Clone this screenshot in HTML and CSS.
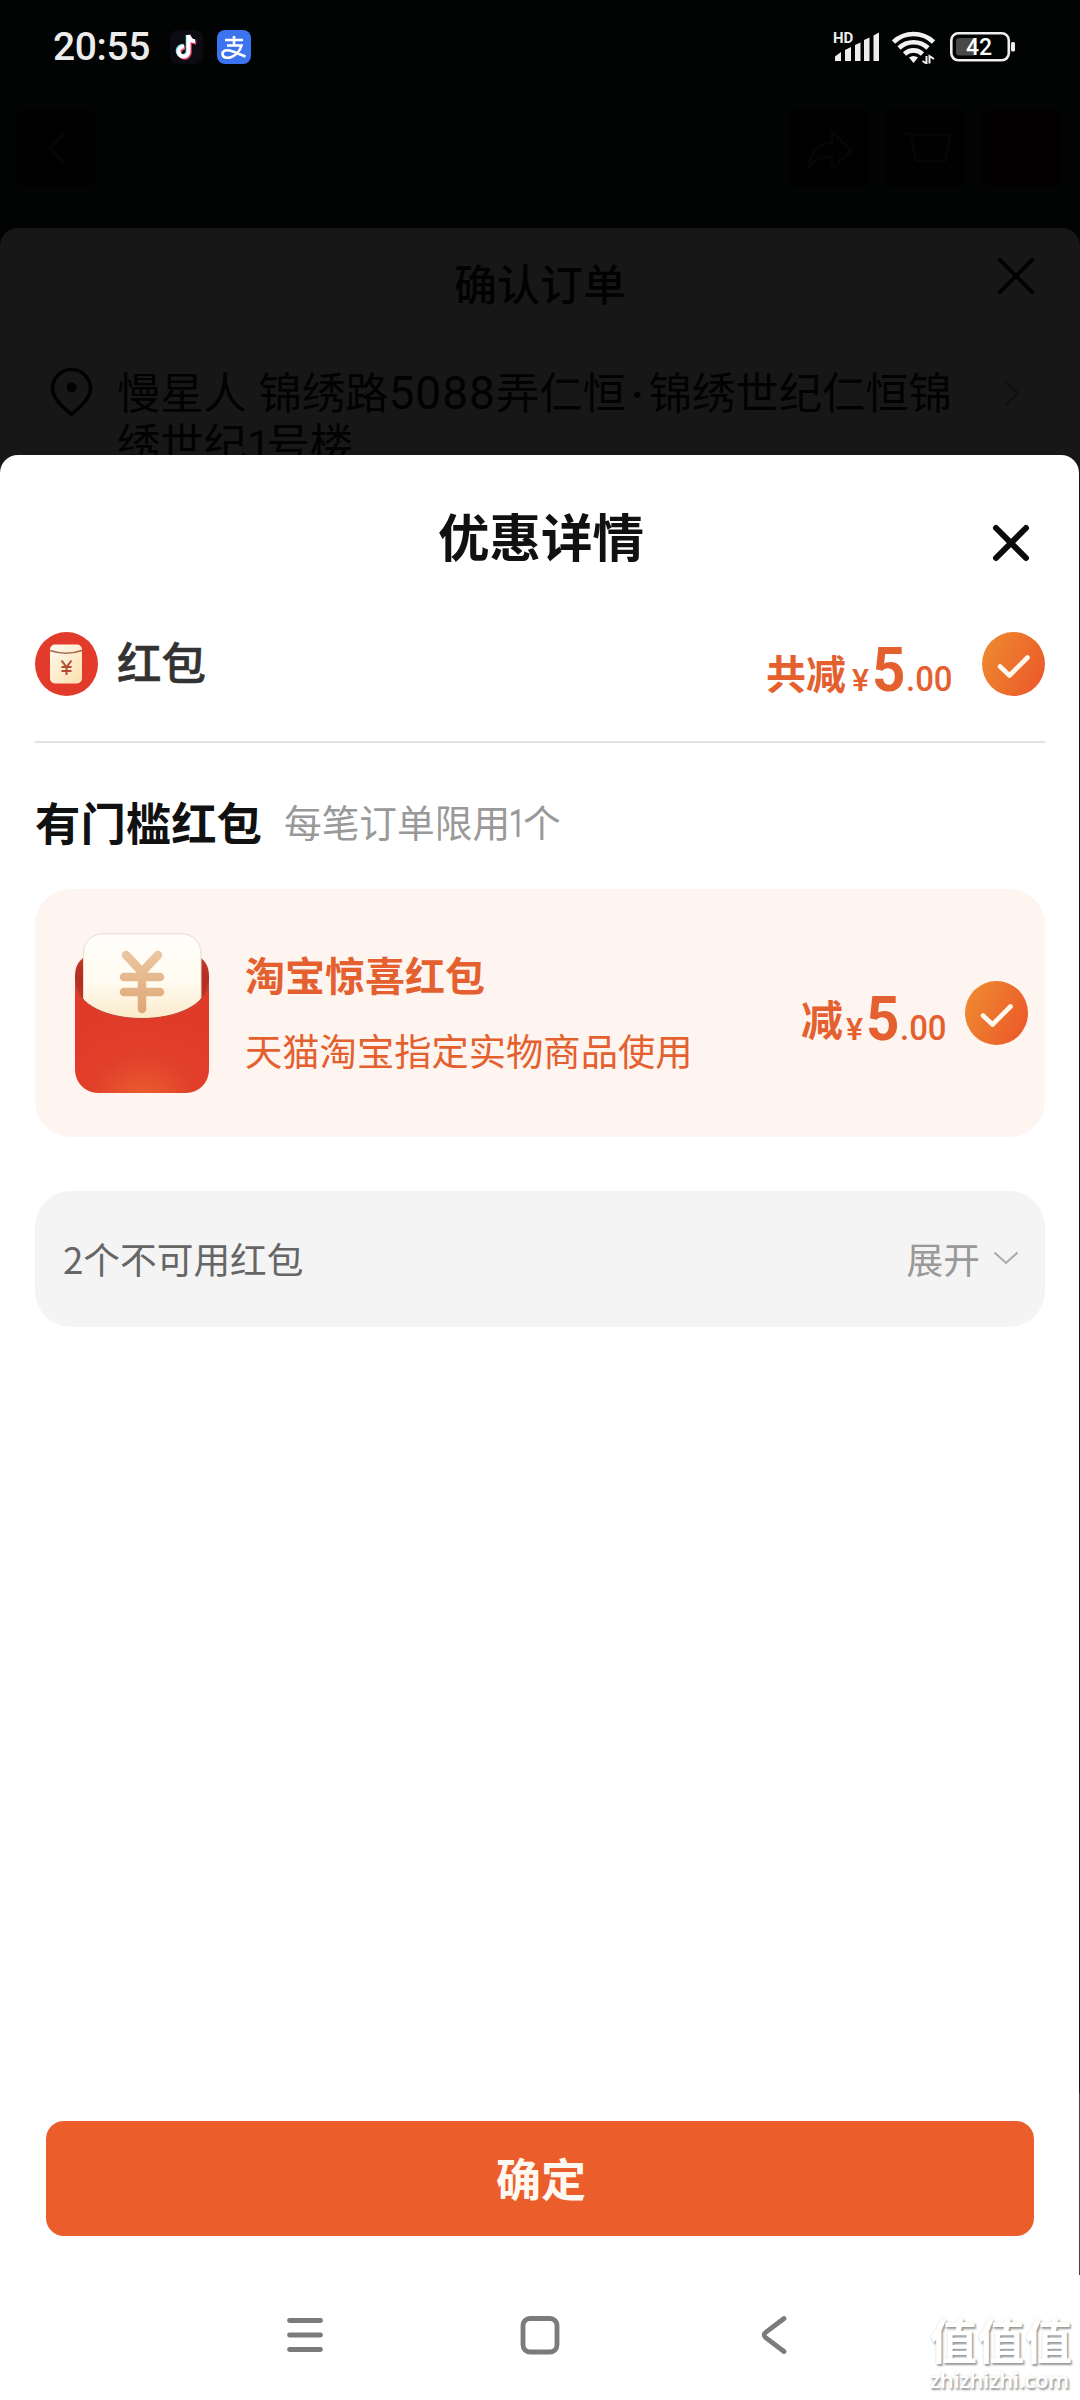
FILE: index.html
```html
<!DOCTYPE html>
<html lang="zh-CN">
<head>
<meta charset="utf-8">
<title>优惠详情</title>
<link rel="stylesheet" href="styles.css">
</head>
<body>
<svg width="0" height="0" class="defs" aria-hidden="true">
  <defs>
    <linearGradient id="tick" x1="0" y1="0.2" x2="1" y2="0.7"><stop offset="0" stop-color="#ee8a30"/><stop offset="1" stop-color="#ec5a2a"/></linearGradient>
    <linearGradient id="paper" x1="0" y1="0" x2="0" y2="1"><stop offset="0" stop-color="#fffefb"/><stop offset="0.55" stop-color="#fffbf0"/><stop offset="1" stop-color="#fbe8c6"/></linearGradient>
    <radialGradient id="pocket" cx="0.5" cy="1.05" r="0.75"><stop offset="0" stop-color="#e8602e"/><stop offset="0.5" stop-color="#e2402b"/><stop offset="1" stop-color="#e03a29"/></radialGradient>
    <linearGradient id="back" x1="0" y1="0" x2="0" y2="1"><stop offset="0" stop-color="#c53a2c"/><stop offset="0.3" stop-color="#b42e22"/><stop offset="1" stop-color="#d8392a"/></linearGradient>
    <linearGradient id="yuan" x1="0" y1="0" x2="0" y2="1"><stop offset="0" stop-color="#ebc5a0"/><stop offset="1" stop-color="#dfa878"/></linearGradient>
    <linearGradient id="mini" x1="0" y1="0" x2="1" y2="1"><stop offset="0" stop-color="#fffaf0"/><stop offset="1" stop-color="#fbdfae"/></linearGradient>
    <symbol id="check" viewBox="0 0 63 64"><ellipse cx="31.5" cy="32" rx="31.5" ry="32" fill="url(#tick)"/><path d="M18 34.5 27.5 43.5 45.500 25.500" fill="none" stroke="#fff8ee" stroke-width="4.600" stroke-linecap="round" stroke-linejoin="round"/></symbol>
  </defs>
</svg>
<div class="phone">
  <header class="backdrop">
    <div class="status">
      <span class="clock">20:55</span>
      <svg class="app-tiktok" viewBox="0 0 33 34"><rect width="33" height="34" rx="8" fill="#0c0b12"/><g fill="none" stroke-width="4"><path d="M14.500 17a5 5 0 1 0 4.500 5V6c.5 4 3 5.500 6.500 6" stroke="#e8476c" transform="translate(.7 .7)"/><path d="M14 16.500a5 5 0 1 0 4.500 5V5.500" stroke="#5fd8e0" transform="translate(-.8 -.6)"/><path d="M14 16.500a5 5 0 1 0 4.500 5V5c.5 4 3 6 6.500 6.300" stroke="#fff"/></g></svg>
      <svg class="app-alipay" viewBox="0 0 34 34"><rect width="34" height="34" rx="8" fill="#3c73ee"/><g fill="none" stroke="#fff" stroke-width="2.600"><path d="M17 6v9.500M8 10h18M10 15.500h14.500c-1.500 5-5 9.500-10 11.500-4.500 1.700-9 .5-9-3s4.500-4.700 9-3c5 1.700 9 4 14 5.500"/></g></svg>
      <span class="grow"></span>
      <svg class="signal" viewBox="0 0 48 34" fill="#eee"><text x="0" y="13" class="hd">HD</text><path d="M2 31v-4.500l6-4.500v9zM12 31V20l6-3v14zM22 31V15l5.500-2.500V31zM31 31V10l5.500-2.500V31zM40.500 31V5.500L46 2.500V31z"/></svg>
      <svg class="wifi" viewBox="0 0 43 34"><g fill="none" stroke="#f2f2f2" stroke-width="4.600"><path d="M1.500 12a29 29 0 0 1 40 0"/><path d="M7 18a21 21 0 0 1 29 0"/><path d="M12.500 24a13 13 0 0 1 18 0"/></g><path d="M17 27.500q4.500-3 9 0L21.500 33z" fill="#f2f2f2"/><path d="M30.500 31l4 2.500V26M37.500 33.500V26l4.500 3" fill="none" stroke="#f2f2f2" stroke-width="2"/></svg>
      <svg class="battery" viewBox="0 0 66 30"><rect x="1.300" y="1.300" width="57.500" height="27" rx="7" fill="none" stroke="#eee" stroke-width="2.600"/><rect x="6" y="6" width="20" height="17.500" rx="3" fill="#484848"/><rect x="61" y="10" width="4" height="9.500" rx="1.500" fill="#eee"/><text x="29" y="23" text-anchor="middle" class="pct">42</text></svg>
    </div>
    <div class="tools">
      <span class="tool"><svg viewBox="0 0 78 78"><path d="M48 24 33 39l15 16"/></svg></span>
      <span class="grow"></span>
      <span class="tool"><svg viewBox="0 0 78 78"><path d="M18 58c2-16 10-24 24-24V22l20 20-20 18V48c-10 0-18 3-24 10z"/></svg></span>
      <span class="tool"><svg viewBox="0 0 78 78"><path d="M18 24h6l6 28h30l5-26H26M32 61h2M56 61h2"/></svg></span>
      <span class="tool hot"></span>
    </div>
  </header>

  <section class="order">
    <div class="order-head">
      <h2>确认订单</h2>
      <svg viewBox="0 0 40 40"><path d="M4 4 36 36M36 4 4 36" stroke="#020202" stroke-width="4" stroke-linecap="round"/></svg>
    </div>
    <div class="address">
      <svg class="pin" viewBox="0 0 43 50" fill="none"><path d="M21.500 47.500C17 43 2.500 33 2.500 21.500a19 19 0 0 1 38 0C40.500 33 26 43 21.500 47.500z" stroke="#020202" stroke-width="3.600" stroke-linejoin="round"/><circle cx="21.500" cy="20.500" r="5" fill="#020202"/></svg>
      <p>慢星人 锦绣路<span class="num">5088</span>弄仁恒<span class="dot">·</span>锦绣世纪仁恒锦<br>绣世纪<span class="one">1</span>号楼</p>
      <svg class="more" viewBox="0 0 20 28"><path d="M3 2 16 14 3 26" fill="none" stroke="#0e0e0e" stroke-width="2"/></svg>
    </div>
  </section>

  <main class="under">
    <section class="sheet">
      <div class="sheet-head">
        <h1>优惠详情</h1>
        <svg viewBox="0 0 40 40"><path d="M5 5 35 35M35 5 5 35" stroke="#0b0b0b" stroke-width="6" stroke-linecap="round"/></svg>
      </div>
      <div class="summary">
        <svg class="coin" viewBox="0 0 63 64"><ellipse cx="31.500" cy="32" rx="31.500" ry="32" fill="#e33b2b"/><rect x="15" y="12.500" width="32" height="39" rx="5" fill="url(#mini)"/><path d="M15 18.500q16 5.500 32 0" fill="none" stroke="#a8674b" stroke-width="1.500"/><g fill="none" stroke="#b54b31" stroke-width="2"><path d="m26.500 28.500 5 6.500 5-6.500M31.500 34v9M26.500 35h10M26.500 39h10"/></g></svg>
        <span class="label">红包</span>
        <span class="grow"></span>
        <span class="price total"><b class="word">共减</b><span class="yen">¥</span><b class="int">5</b><span class="dec">.00</span></span>
        <svg class="check"><use href="#check"/></svg>
      </div>
      <div class="group">
        <h3>有门槛红包</h3>
        <span>每笔订单限用<i>1</i>个</span>
      </div>
      <article class="coupon">
        <svg class="envelope" viewBox="0 0 134 161">
          <path d="M0 43C0 31 6 25 13 23H121C128 25 134 31 134 43V100H0z" fill="url(#back)"/>
          <path d="M8.500 90V20A19 19 0 0 1 27.500.8H107A19 19 0 0 1 126 20V90z" fill="url(#paper)" stroke="#e6dccb" stroke-width="1"/>
          <path d="m51 22 16 17 16-17M67 39v37M49 44h36M49 59h36" fill="none" stroke="url(#yuan)" stroke-width="8.500" stroke-linecap="round" stroke-linejoin="round"/>
          <path d="M0 48C2 98 132 98 134 48V137A23 23 0 0 1 111 160H23A23 23 0 0 1 0 137z" fill="url(#pocket)"/>
          <path d="M.5 48C2 98 132 98 133.500 48" fill="none" stroke="#bd4433" stroke-width="1"/>
        </svg>
        <div class="info">
          <h4>淘宝惊喜红包</h4>
          <p>天猫淘宝指定实物商品使用</p>
        </div>
        <span class="grow"></span>
        <span class="price"><b class="word">减</b><span class="yen">¥</span><b class="int">5</b><span class="dec">.00</span></span>
        <svg class="check"><use href="#check"/></svg>
      </article>
      <div class="unusable">
        <span>2个不可用红包</span>
        <span class="grow"></span>
        <span class="expand">展开</span>
        <svg viewBox="0 0 26 14"><path d="m1.500 1.500 11.500 10.500 11.500-10.500" fill="none" stroke="#aaa" stroke-width="2"/></svg>
      </div>
      <button class="confirm">确定</button>
    </section>
  </main>

  <nav class="nav">
    <svg viewBox="0 0 40 40"><path d="M4.500 5.500h31M4.500 20h31M4.500 34.500h31"/></svg>
    <svg viewBox="0 0 40 40"><rect x="3" y="3.500" width="34" height="33.500" rx="7"/></svg>
    <svg viewBox="0 0 40 40"><path d="M30 3.500 12 17q-3.500 3 0 6l18 13.500"/></svg>
    <div class="watermark"><strong>值值值</strong><span>zhizhizhi.com</span></div>
  </nav>
</div>
</body>
</html>
```
FILE: styles.css
```css
* { box-sizing: border-box; }
body, h1, h2, h3, h4, p { margin: 0; }
body { background: #fff; font-family: "Noto Sans CJK SC", sans-serif; }
svg { display: block; flex: none; }
.defs { position: absolute; }
.grow { flex: 1; }
.phone { width: 1080px; height: 2400px; display: flex; flex-direction: column; overflow: hidden; background: #020303; }

.backdrop { height: 228px; background: #020303; }
.status { height: 107px; padding: 30px 64px 0 53px; display: flex; align-items: flex-start; }
.clock { width: 117px; font: 500 39px/34px Roboto, sans-serif; letter-spacing: -.4px; color: #ececec; }
.app-tiktok { width: 33px; height: 34px; margin-right: 14px; }
.app-alipay { width: 34px; height: 34px; }
.signal { width: 48px; height: 34px; margin-right: 11px; overflow: visible; }
.hd { font: 700 15px Roboto, sans-serif; }
.wifi { width: 43px; height: 34px; margin-right: 15px; }
.battery { width: 66px; height: 30px; margin-top: 2px; }
.pct { font: 500 23px Roboto, sans-serif; fill: #fff; }
.tools { display: flex; gap: 18px; padding: 3px 20px 0 17px; }
.tool { width: 78px; height: 76px; border-radius: 6px; background: #010101; }
.tool svg { width: 78px; height: 76px; fill: none; stroke: #050606; stroke-width: 3; }
.hot { background: #030001; }

.order { height: 227px; flex: none; overflow: hidden; background: #171717; border-radius: 18px 18px 0 0; color: #020202; }
.order-head { height: 107px; display: grid; grid-template-columns: 1fr auto 1fr; align-items: center; }
.order-head h2 { grid-column: 2; font-size: 43px; font-weight: 500; line-height: 60px; }
.order-head svg { width: 40px; height: 40px; justify-self: end; margin: 0 44px 11px 0; }
.address { display: flex; align-items: flex-start; padding: 30px 58px 0 50px; }
.pin { width: 43px; height: 50px; margin: 2px 24px 0 0; }
.address p { flex: 1; font-size: 43.3px; line-height: 51px; white-space: nowrap; word-spacing: 2px; }
.num { font: 400 46px/40px Roboto, sans-serif; letter-spacing: 1px; }
.dot { display: inline-block; width: 23px; text-align: center; font: 700 43px/40px Roboto, sans-serif; }
.one { font: 400 42px/40px Roboto, sans-serif; letter-spacing: -4px; }
.more { width: 20px; height: 28px; margin-top: 14px; }

.under { height: 1820px; flex: none; background: linear-gradient(#171717 90%, #444 90%); }
.sheet { width: 1079px; height: 1820px; padding: 0 34px 0 35px; display: flex; flex-direction: column; background: #fff; border-radius: 18px 18px 0 0; }
.sheet-head { height: 158px; display: grid; grid-template-columns: 1fr auto 1fr; align-items: center; }
.sheet-head h1 { grid-column: 2; margin: 2px -1px 0 1px; font-size: 51.5px; font-weight: 700; line-height: 70px; color: #111; }
.sheet-head svg { width: 40px; height: 40px; justify-self: end; margin: 18px 14px 0 0; }
.summary { height: 130px; padding-bottom: 26px; display: flex; align-items: center; border-bottom: 2px solid #e2e2e2; }
.coin { width: 63px; height: 64px; }
.label { margin: -6px 0 0 19px; font-size: 44.5px; font-weight: 500; line-height: 60px; color: #333; -webkit-text-stroke: .6px #333; }
.price { display: flex; align-items: baseline; height: 60px; line-height: 60px; color: #e4602f; }
.word { position: relative; top: -2px; font-size: 40px; font-weight: 700; }
.yen { width: 20px; margin-left: 6px; font: 500 32px/60px Roboto, sans-serif; }
.int { width: 34px; font: 700 62px/60px Roboto, sans-serif; transform: scaleX(.94); transform-origin: left; }
.dec { width: 48px; font: 500 35px/60px Roboto, sans-serif; transform: scaleX(.94); transform-origin: left; }
.total { margin-top: 11px; }
.check { width: 63px; height: 64px; margin-left: 28px; }
.group { height: 145px; display: flex; align-items: center; padding-top: 10px; gap: 22px; }
.group h3 { font-size: 45.4px; font-weight: 700; line-height: 66px; color: #111; }
.group span { font-size: 37.7px; line-height: 66px; color: #999; }
.group i { display: inline-block; width: 13px; font: 400 38px/60px Roboto, sans-serif; transform: scaleX(.8) translateX(-2px); transform-origin: left; }
.coupon { height: 248px; margin-top: 1px; padding: 0 17px 0 40px; display: flex; align-items: center; background: #fef5f1; border-radius: 36px; }
.envelope { width: 134px; height: 161px; }
.info { margin: -2px 0 0 36px; color: #e4602f; }
.info h4 { font-size: 40px; font-weight: 700; line-height: 76px; }
.info p { font-size: 37.3px; line-height: 76px; }
.coupon .price { margin-top: 12px; }
.coupon .word { top: -4px; font-size: 42px; }
.coupon .yen { margin-left: 3px; }
.coupon .check { margin-left: 17px; }
.unusable { height: 136px; margin-top: 54px; padding: 0 26px 2px 28px; display: flex; align-items: center; background: #f4f4f4; border-radius: 36px; font-size: 36.7px; color: #666; }
.expand { margin-right: 13px; color: #999; }
.unusable svg { width: 26px; height: 14px; }
.confirm { height: 115px; margin: auto 11px 39px 11px; padding: 0 0 2px 2px; border: 0; border-radius: 18px; background: #eb5e2c; color: #fff8f0; font: 700 45px/60px "Noto Sans CJK SC", sans-serif; }

.nav { height: 125px; flex: none; padding: 40px 8px 0 285px; display: flex; background: #fff; }
.nav > svg { width: 40px; height: 40px; margin-right: 195px; fill: none; stroke: #7b7b7b; stroke-width: 4.8; stroke-linecap: round; }
.nav > svg:nth-child(3) { margin: 0 0 0 -1px; }
.watermark { margin: -1px 0 0 auto; display: flex; flex-direction: column; color: #fff; text-shadow: 1.5px 1.5px 2px #999, 0 0 2px #ddd; }
.watermark strong { font-size: 47.5px; font-weight: 700; line-height: 50px; }
.watermark span { font: 600 22px/30px "Noto Sans", sans-serif; letter-spacing: -.4px; }
```
